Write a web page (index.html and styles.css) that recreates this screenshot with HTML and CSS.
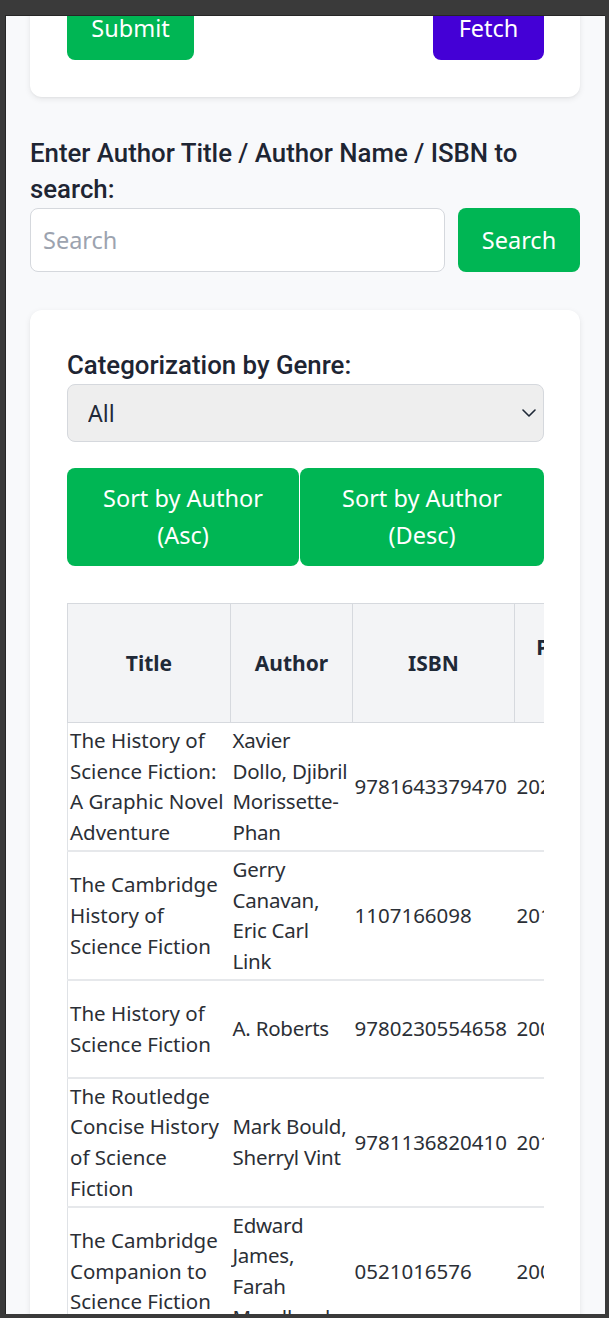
FILE: index.html
```html
<!DOCTYPE html>
<html lang="en">
<head>
<meta charset="utf-8">
<title>Books</title>
<link rel="stylesheet" href="styles.css">
</head>
<body>
<div class="screen">
  <div class="viewport">
    <div class="page">
      <section class="card card-actions">
        <button class="btn btn-green btn-submit">Submit</button>
        <button class="btn btn-purple btn-fetch">Fetch</button>
      </section>

      <div class="search-block">
        <label class="search-label" for="q">Enter Author Title / Author Name / ISBN to search:</label>
        <div class="search-row">
          <input id="q" class="search-input" type="text" placeholder="Search">
          <button class="btn btn-green btn-search">Search</button>
        </div>
      </div>

      <section class="card card-list">
        <label class="genre-label" for="genre">Categorization by Genre:</label>
        <div class="select-wrap">
          <select id="genre" class="genre-select">
            <option>All</option>
          </select>
          <svg class="chevron" width="14" height="8" viewBox="0 0 14 8"><path d="M1 1l6 6 6-6" fill="none" stroke="#1f2937" stroke-width="1.6" stroke-linecap="round" stroke-linejoin="round"/></svg>
        </div>
        <div class="sort-row">
          <button class="btn btn-green btn-sort">Sort by Author<br>(Asc)</button>
          <button class="btn btn-green btn-sort">Sort by Author<br>(Desc)</button>
        </div>
        <div class="table-wrap">
          <table class="books">
            <colgroup>
              <col class="c-title"><col class="c-author"><col class="c-isbn"><col class="c-date"><col class="c-pub">
            </colgroup>
            <thead>
              <tr><th>Title</th><th>Author</th><th>ISBN</th><th>Published Date</th><th>Publisher</th></tr>
            </thead>
            <tbody>
              <tr><td>The History of Science Fiction: A Graphic Novel Adventure</td><td>Xavier Dollo,&nbsp;Djibril Morissette-Phan</td><td>9781643379470</td><td>2021</td><td>Humanoids</td></tr>
              <tr><td>The Cambridge History of Science Fiction</td><td>Gerry Canavan, Eric Carl Link</td><td>1107166098</td><td>2019</td><td>Cambridge University Press</td></tr>
              <tr><td>The History of Science Fiction</td><td>A. Roberts</td><td>9780230554658</td><td>2006</td><td>Palgrave Macmillan UK</td></tr>
              <tr><td>The Routledge Concise History of Science Fiction</td><td>Mark Bould, Sherryl Vint</td><td>9781136820410</td><td>2011</td><td>Routledge</td></tr>
              <tr><td>The Cambridge Companion to Science Fiction</td><td>Edward James, Farah Mendlesohn</td><td>0521016576</td><td>2003</td><td>Cambridge University Press</td></tr>
            </tbody>
          </table>
        </div>
      </section>
    </div>
  </div>
</div>
</body>
</html>
```

FILE: styles.css
```css
* { box-sizing: border-box; }
html, body { margin: 0; padding: 0; }
body {
  background: #3a3a3a;
  font-family: "Noto Sans", "Open Sans", sans-serif;
  color: #1f2937;
}
.screen {
  width: 609px;
  height: 1318px;
  padding: 15px 4px 4px 5px;
  background: #3a3a3a;
}
.viewport {
  width: 600px;
  height: 1299px;
  overflow: hidden;
  background: #f8f9fb;
  border-left: 1px solid #262626;
  border-top: 1px solid #262626;
}
.page {
  margin-top: -57px;
  padding: 0 25px 0 24px;
}
.card {
  background: #fff;
  border-radius: 12px;
  box-shadow: 0 2px 6px rgba(0,0,0,0.08), 0 1px 2px rgba(0,0,0,0.04);
}
.card-actions {
  display: flex;
  justify-content: space-between;
  padding: 37px 36px 37px 37px;
}
.btn {
  border: none;
  color: #fff;
  font-family: inherit;
  font-size: 23.5px;
  border-radius: 8px;
  cursor: pointer;
}
.btn-green { background: #00b654; }
.btn-purple { background: #4400d6; }
.btn-submit { width: 127px; height: 64px; }
.btn-fetch { width: 111px; height: 64px; }

.search-block { margin-top: 38px; }
.search-label {
  display: block;
  font-family: Roboto, "Noto Sans", sans-serif;
  font-size: 25.8px;
  font-weight: 500;
  line-height: 36px;
  color: #1e2533;
  padding-right: 30px;
}
.search-row {
  display: flex;
  gap: 13px;
  margin-top: 1px;
}
.search-input {
  flex: 1;
  height: 64px;
  border: 1.5px solid #d5d8dd;
  border-radius: 8px;
  padding: 0 12px;
  font-family: inherit;
  font-size: 23.5px;
  color: #1f2937;
  background: #fff;
}
.search-input::placeholder { color: #9ca3af; }
.btn-search { width: 122px; height: 64px; }

.card-list {
  margin-top: 38px;
  padding: 37px 36px 40px 37px;
}
.genre-label {
  display: block;
  font-family: Roboto, "Noto Sans", sans-serif;
  font-size: 25.8px;
  font-weight: 500;
  line-height: 36px;
  color: #1e2533;
}
.select-wrap {
  position: relative;
  margin-top: 1px;
}
.genre-select {
  -webkit-appearance: none;
  appearance: none;
  width: 100%;
  height: 58px;
  border: 1.5px solid #d5d8dd;
  border-radius: 8px;
  background: #eeeeee;
  padding: 0 20px;
  font-family: inherit;
  font-size: 23px;
  color: #1f2937;
}
.chevron {
  position: absolute;
  right: 8px;
  top: 25px;
}
.sort-row {
  display: grid;
  grid-template-columns: 232px 1fr;
  gap: 1px;
  margin-top: 26px;
}
.btn-sort {
  height: 98px;
  line-height: 37px;
  padding: 12px 8px;
}
.table-wrap {
  margin-top: 37px;
  overflow: hidden;
}
.books {
  border-collapse: collapse;
  table-layout: fixed;
  width: 713px;
  font-size: 20.5px;
  line-height: 30.7px;
  color: #2b2f36;
  border-left: 1px solid #dfe2e6;
}
.c-title { width: 163px; }
.c-author { width: 122px; }
.c-isbn { width: 162px; }
.c-date { width: 146px; }
.c-pub { width: 120px; }
.books th {
  background: #f3f4f6;
  border: 1.5px solid #d6d9de;
  height: 119px;
  font-size: 21px;
  font-weight: 700;
  color: #1f2937;
  padding: 8px;
}
.books td {
  padding: 2px 1px 2px 2px;
  border-bottom: 2px solid #e6e8eb;
  vertical-align: middle;
  overflow: hidden;
  white-space: normal;
}
.books td:nth-child(2) { letter-spacing: -0.25px; }
.books td:nth-child(3), .books td:nth-child(4) { white-space: nowrap; }
```
